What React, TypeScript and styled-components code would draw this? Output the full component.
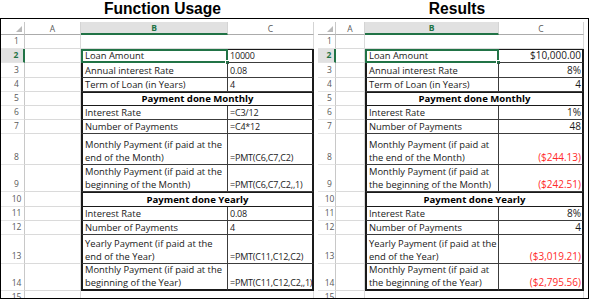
import React from 'react';
import styled, {createGlobalStyle} from 'styled-components';

const GREEN = '#217346';
const INK = '#1a1a1a';
const GRID = '#dadada';

const GlobalStyle = createGlobalStyle`
  html, body {
    margin: 0;
    padding: 0;
    background: #fff;
  }
  body {
    font-family: 'Open Sans', 'Liberation Sans', sans-serif;
    color: #000;
  }
`;

const Page = styled.div`
  width: 593px;
  height: 302px;
  background: #fff;
  display: flex;
  flex-direction: column;
`;

const Titles = styled.div`
  display: flex;
  height: 18px;
`;

const Title = styled.div<{$w: number}>`
  width: ${p => p.$w}px;
  text-align: center;
  font-family: 'Liberation Sans', Arial, sans-serif;
  font-size: 15.6px;
  line-height: 17.5px;
  font-weight: 700;
  color: #000;
`;

const Frame = styled.div`
  box-sizing: border-box;
  width: 589px;
  height: 281px;
  border: 1px solid #000;
  padding-top: 3px;
  display: flex;
  overflow: hidden;
`;

const Sheet = styled.div<{$cols: string; $rows: string; $w: number; $pad: number}>`
  width: ${p => p.$w}px;
  padding-left: ${p => p.$pad}px;
  box-sizing: border-box;
  height: 276px;
  overflow: hidden;
  display: grid;
  grid-template-columns: ${p => p.$cols};
  grid-template-rows: ${p => p.$rows};
  align-content: start;
`;

const Corner = styled.div`
  box-sizing: border-box;
  border-right: 1px solid #c8c8c8;
  border-bottom: 1px solid #ababab;
  display: flex;
  align-items: flex-end;
  justify-content: flex-end;
  padding: 0 2px 2px 0;
`;

const ColHead = styled.div<{$active?: boolean}>`
  box-sizing: border-box;
  display: flex;
  align-items: center;
  justify-content: center;
  font-size: 8.5px;
  color: ${p => (p.$active ? GREEN : '#595959')};
  font-weight: ${p => (p.$active ? 700 : 400)};
  background: ${p => (p.$active ? '#e1e1e1' : '#fff')};
  border-right: 1px solid #d4d4d4;
  border-bottom: ${p => (p.$active ? `2px solid ${GREEN}` : '1px solid #ababab')};
`;

const RowHead = styled.div<{$active?: boolean; $shift: number}>`
  box-sizing: border-box;
  display: flex;
  align-items: flex-end;
  justify-content: center;
  padding-left: ${p => p.$shift}px;
  padding-bottom: 1px;
  line-height: 12px;
  font-size: 8.5px;
  color: ${p => (p.$active ? GREEN : '#595959')};
  font-weight: ${p => (p.$active ? 700 : 400)};
  background: ${p => (p.$active ? '#e1e1e1' : '#fff')};
  border-right: ${p => (p.$active ? `2px solid ${GREEN}` : '1px solid #c8c8c8')};
  border-bottom: 1px solid #e4e4e4;
`;

const GridCell = styled.div<{$span?: number}>`
  box-sizing: border-box;
  grid-column: span ${p => p.$span ?? 1};
  border-right: 1px solid ${GRID};
  border-bottom: 1px solid ${GRID};
`;

const TableCell = styled.div<{
  $side: 'b' | 'c';
  $first?: boolean;
  $last?: boolean;
  $align: 'left' | 'right';
  $size: number;
  $track?: number;
  $red?: boolean;
}>`
  position: relative;
  box-sizing: border-box;
  display: flex;
  flex-direction: column;
  justify-content: flex-end;
  align-items: ${p => (p.$align === 'right' ? 'flex-end' : 'flex-start')};
  padding: 0 1px 0 2px;
  font-size: ${p => p.$size}px;
  letter-spacing: ${p => p.$track ?? 0}px;
  line-height: 13px;
  white-space: nowrap;
  color: ${p => (p.$red ? '#ff2a2a' : INK)};
  border-top: ${p => (p.$first ? `1px solid ${INK}` : 'none')};
  border-left: ${p => (p.$side === 'b' ? `2px solid ${INK}` : 'none')};
  border-right: ${p => (p.$side === 'c' ? `2px solid ${INK}` : '1px solid #3c3c3c')};
  border-bottom: ${p => (p.$last ? `2px solid ${INK}` : '1px solid #3c3c3c')};
`;

const SectionCell = styled.div`
  grid-column: span 2;
  box-sizing: border-box;
  display: flex;
  align-items: flex-end;
  justify-content: center;
  font-size: 9.6px;
  line-height: 13px;
  font-weight: 700;
  color: #000;
  border-left: 2px solid ${INK};
  border-right: 2px solid ${INK};
  border-top: 1px solid ${INK};
  border-bottom: 1px solid ${INK};
`;

const Line = styled.span`
  display: block;
`;

const Selection = styled.div`
  position: absolute;
  left: -2px;
  top: -1px;
  right: -1px;
  bottom: -1px;
  border: 2px solid ${GREEN};
  pointer-events: none;
`;

const Handle = styled.div`
  position: absolute;
  right: -4px;
  bottom: -4px;
  width: 5px;
  height: 5px;
  background: ${GREEN};
  border: 1px solid #fff;
  box-sizing: border-box;
`;

type Row = {
  n: number;
  kind: 'blank' | 'data' | 'section';
  b?: string[];
  c?: string;
  red?: boolean;
};

const heights: Record<number, number> = {8: 31, 9: 27, 13: 29, 14: 27};
const rowHeight = (n: number) => heights[n] ?? 14.2;

const leftRows: Row[] = [
  {n: 1, kind: 'blank'},
  {n: 2, kind: 'data', b: ['Loan Amount'], c: '10000'},
  {n: 3, kind: 'data', b: ['Annual interest Rate'], c: '0.08'},
  {n: 4, kind: 'data', b: ['Term of Loan (in Years)'], c: '4'},
  {n: 5, kind: 'section', b: ['Payment done Monthly']},
  {n: 6, kind: 'data', b: ['Interest Rate'], c: '=C3/12'},
  {n: 7, kind: 'data', b: ['Number of Payments'], c: '=C4*12'},
  {n: 8, kind: 'data', b: ['Monthly Payment (if paid at the', 'end of the Month)'], c: '=PMT(C6,C7,C2)'},
  {n: 9, kind: 'data', b: ['Monthly Payment (if paid at the', 'beginning of the Month)'], c: '=PMT(C6,C7,C2,,1)'},
  {n: 10, kind: 'section', b: ['Payment done Yearly']},
  {n: 11, kind: 'data', b: ['Interest Rate'], c: '0.08'},
  {n: 12, kind: 'data', b: ['Number of Payments'], c: '4'},
  {n: 13, kind: 'data', b: ['Yearly Payment (if paid at the', 'end of the Year)'], c: '=PMT(C11,C12,C2)'},
  {n: 14, kind: 'data', b: ['Monthly Payment (if paid at the', 'beginning of the Year)'], c: '=PMT(C11,C12,C2,,1)'},
  {n: 15, kind: 'blank'},
];

const rightRows: Row[] = [
  {n: 1, kind: 'blank'},
  {n: 2, kind: 'data', b: ['Loan Amount'], c: '$10,000.00'},
  {n: 3, kind: 'data', b: ['Annual interest Rate'], c: '8%'},
  {n: 4, kind: 'data', b: ['Term of Loan (in Years)'], c: '4'},
  {n: 5, kind: 'section', b: ['Payment done Monthly']},
  {n: 6, kind: 'data', b: ['Interest Rate'], c: '1%'},
  {n: 7, kind: 'data', b: ['Number of Payments'], c: '48'},
  {n: 8, kind: 'data', b: ['Monthly Payment (if paid at', 'the end of the Month)'], c: '($244.13)', red: true},
  {n: 9, kind: 'data', b: ['Monthly Payment (if paid at', 'the beginning of the Month)'], c: '($242.51)', red: true},
  {n: 10, kind: 'section', b: ['Payment done Yearly']},
  {n: 11, kind: 'data', b: ['Interest Rate'], c: '8%'},
  {n: 12, kind: 'data', b: ['Number of Payments'], c: '4'},
  {n: 13, kind: 'data', b: ['Yearly Payment (if paid at the', 'end of the Year)'], c: '($3,019.21)', red: true},
  {n: 14, kind: 'data', b: ['Monthly Payment (if paid at', 'the beginning of the Year)'], c: '($2,795.56)', red: true},
  {n: 15, kind: 'blank'},
];

type SheetProps = {
  rows: Row[];
  cols: number[];
  width: number;
  pad: number;
  shift: number;
  align: 'left' | 'right';
  valueSize: number;
  valueTrack: number;
};

const SpreadSheet = ({rows, cols, width, pad, shift, align, valueSize, valueTrack}: SheetProps) => {
  const template = ['13px', ...rows.map(r => `${rowHeight(r.n)}px`)].join(' ');
  return (
    <Sheet $cols={cols.map(c => `${c}px`).join(' ')} $rows={template} $w={width} $pad={pad}>
      <Corner>
        <svg width="6" height="6" viewBox="0 0 6 6">
          <polygon points="6,0 6,6 0,6" fill="#b9b9b9" />
        </svg>
      </Corner>
      <ColHead>A</ColHead>
      <ColHead $active>B</ColHead>
      <ColHead>C</ColHead>
      {rows.map(r => (
        <React.Fragment key={r.n}>
          <RowHead $active={r.n === 2} $shift={shift}>
            {r.n}
          </RowHead>
          <GridCell />
          {r.kind === 'blank' && <GridCell $span={2} />}
          {r.kind === 'section' && <SectionCell>{r.b?.[0]}</SectionCell>}
          {r.kind === 'data' && (
            <>
              <TableCell $side="b" $align="left" $size={9.4} $first={r.n === 2} $last={r.n === 14}>
                {r.b?.map(line => <Line key={line}>{line}</Line>)}
                {r.n === 2 && (
                  <Selection>
                    <Handle />
                  </Selection>
                )}
              </TableCell>
              <TableCell
                $side="c"
                $align={align}
                $size={valueSize}
                $track={valueTrack}
                $first={r.n === 2}
                $last={r.n === 14}
                $red={r.red}
              >
                <Line>{r.c}</Line>
              </TableCell>
            </>
          )}
        </React.Fragment>
      ))}
    </Sheet>
  );
};

export default function App() {
  return (
    <Page>
      <GlobalStyle />
      <Titles>
        <Title $w={325}>Function Usage</Title>
        <Title $w={264}>Results</Title>
      </Titles>
      <Frame>
        <SpreadSheet
          rows={leftRows}
          cols={[24, 56, 147, 86]}
          width={315}
          pad={0}
          shift={8}
          align="left"
          valueSize={9}
          valueTrack={-0.2}
        />
        <SpreadSheet
          rows={rightRows}
          cols={[18, 29, 134, 85]}
          width={272}
          pad={2}
          shift={6}
          align="right"
          valueSize={10}
          valueTrack={0}
        />
      </Frame>
    </Page>
  );
}
